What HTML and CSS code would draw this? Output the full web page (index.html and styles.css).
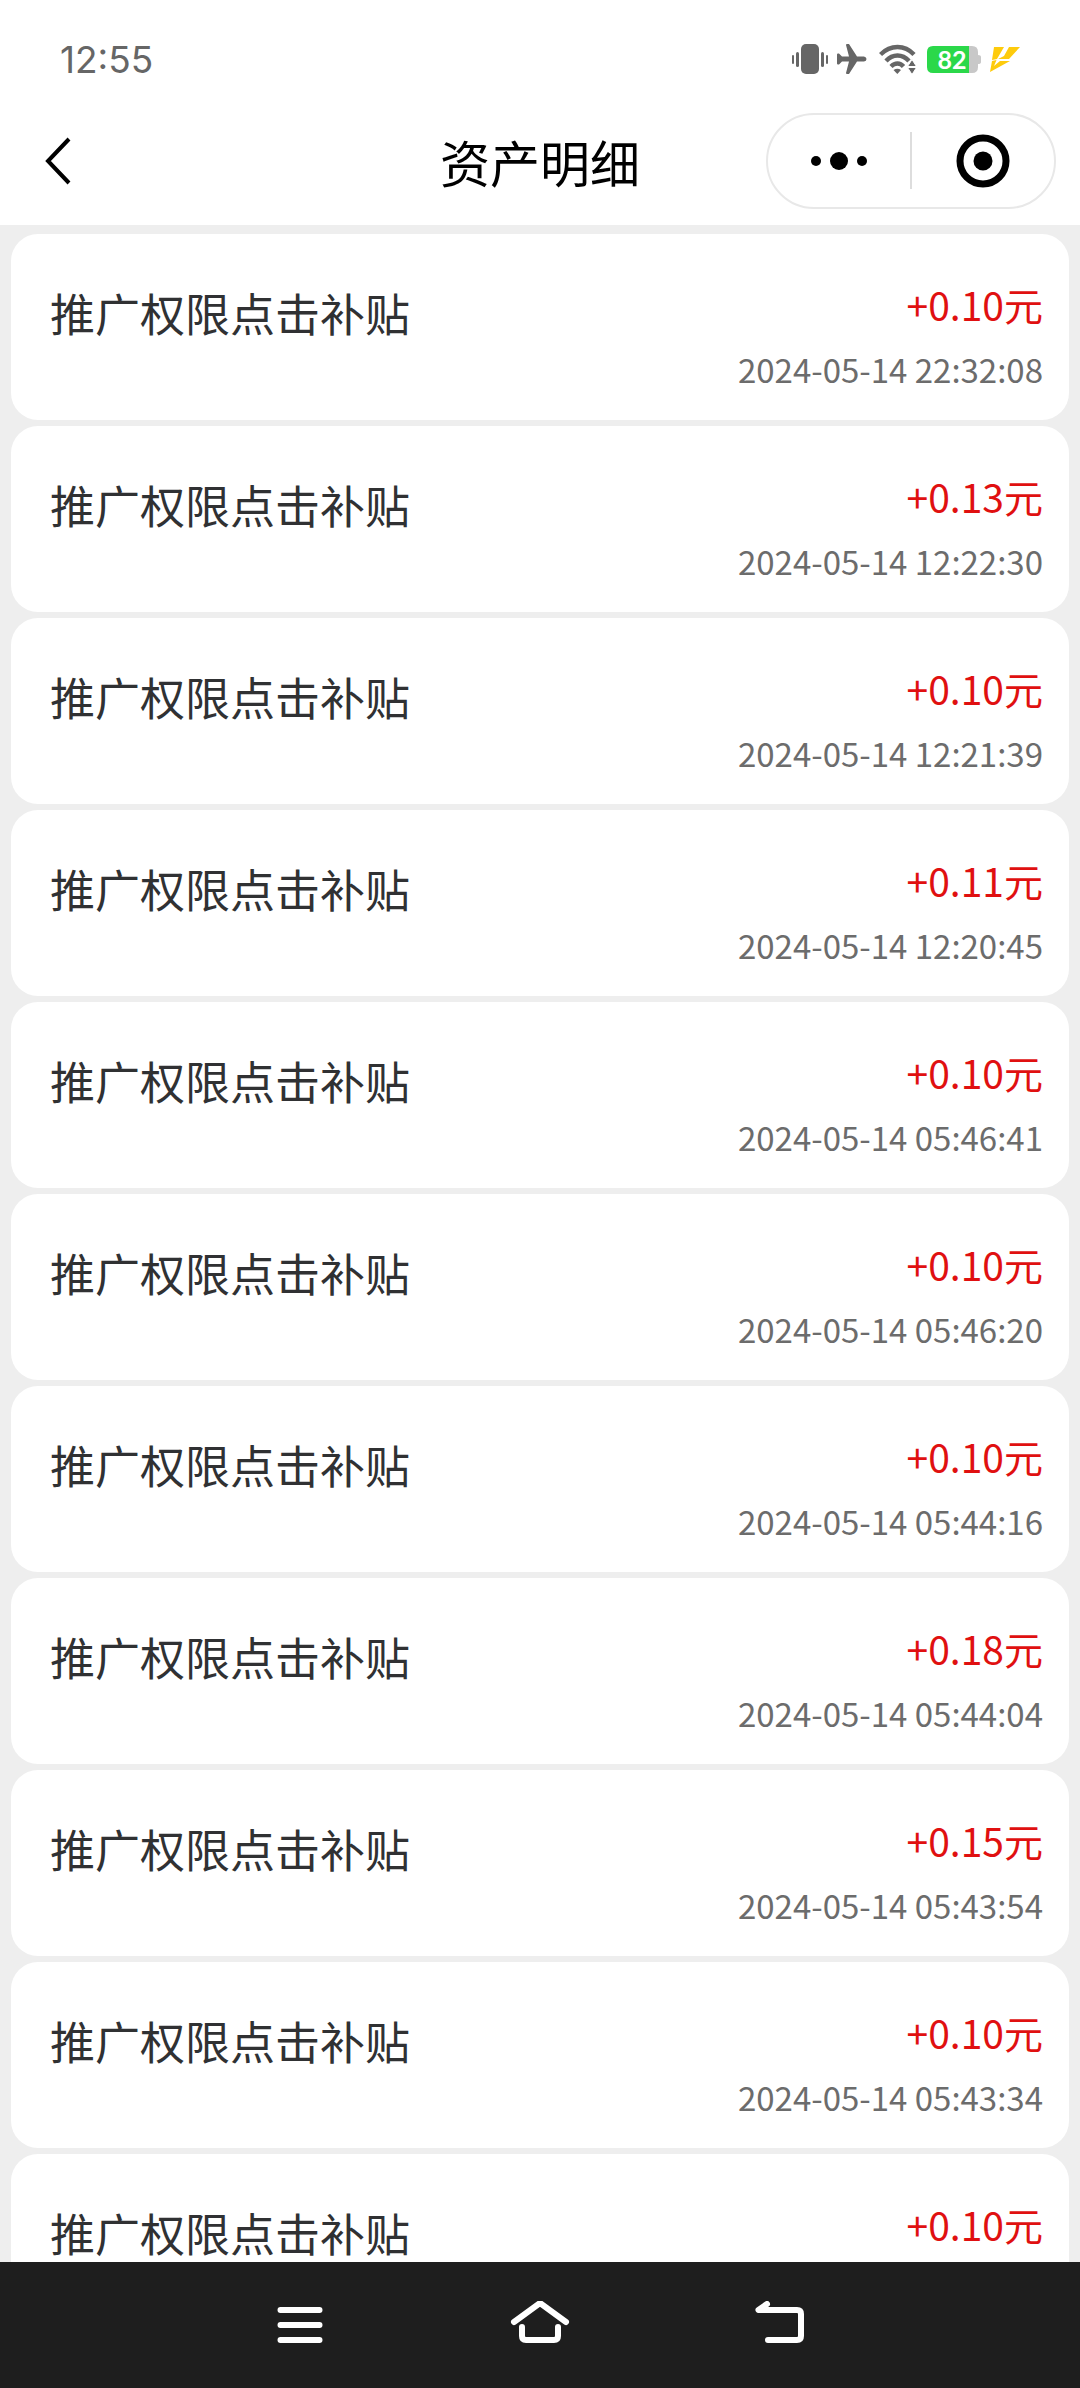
FILE: index.html
```html
<!DOCTYPE html>
<html lang="zh-CN">

<head>
    <meta charset="UTF-8">
    <meta name="viewport" content="width=device-width, initial-scale=1.0">
    <title>资产明细</title>
    <link rel="stylesheet" href="styles.css">
</head>

<body>

    <div class="status-bar">
        <span class="time">12:55</span>
        <div class="status-icons">
            <!-- vibrate -->
            <svg width="36" height="30" viewBox="0 0 36 30" fill="#666">
                <rect x="9" y="0" width="18" height="30" rx="5"/>
                <rect x="4" y="8" width="3" height="15" rx="1.5"/>
                <rect x="0" y="11" width="2" height="9" rx="1"/>
                <rect x="29" y="8" width="3" height="15" rx="1.5"/>
                <rect x="34" y="11" width="2" height="9" rx="1"/>
            </svg>
            <!-- airplane mode -->
            <svg class="plane" width="30" height="30" viewBox="0 0 30 30" fill="#666">
                <path d="M0 10.5Q0 9.5 1 9.5H2L5 12.5H12L9 1Q9 0 10 0H12L20 12.5H27Q29.5 13 29.5 15T27 17.5H20L12 30H10Q9 30 9 29L12 17.5H5L2 20.5H1Q0 20.5 0 19.5Z"/>
            </svg>
            <!-- wifi -->
            <svg class="wifi" width="37" height="30" viewBox="0 0 37 30" fill="none" stroke="#666" stroke-width="4.4">
                <path d="M1.5 10.5Q9 3 18.5 3T35 10.5"/>
                <path d="M7 17Q12 11.5 18.5 11.5T30 17"/>
                <path d="M12 22.500Q15 19.500 18.500 19.500T24.500 22.500"/>
                <path d="M14.500 26Q18.500 23.500 22 26L18.300 30Z" fill="#666" stroke="none"/>
                <path d="M33 15.500L37.500 22.500H28.500ZM33 30.500L28.500 23.500H37.500Z" fill="#666" stroke="#fff" stroke-width="1"/>
            </svg>
            <!-- battery -->
            <svg class="battery" width="54" height="27" viewBox="0 0 54 27">
                <path d="M42 0H45Q51 0 51 6V9Q54 9 54 11V16Q54 18 51 18V21Q51 27 45 27H42Z" fill="#c8c8c8"/>
                <path d="M6 0H42V27H6Q0 27 0 21V6Q0 0 6 0Z" fill="#2bd84a"/>
                <text x="25" y="23" class="battery-level">82</text>
            </svg>
            <!-- charging -->
            <svg class="bolt" width="30" height="25" viewBox="0 0 30 25" fill="#fecb0c">
                <path d="M4 0H14L7 12L2 13Z"/>
                <path d="M19 0H30L19 12H8L14 9Z"/>
                <path d="M2 14L6.500 13L4 19L10 14H20L0 25Z"/>
            </svg>
        </div>
    </div>

    <header>
        <button class="back" aria-label="返回">
            <svg width="26" height="48" viewBox="0 0 26 48" fill="none" stroke="#000" stroke-width="4">
                <path d="M24 2L3 24L24 46"/>
            </svg>
        </button>
        <h1>资产明细</h1>
        <div class="capsule">
            <button aria-label="更多">
                <svg width="56" height="18" viewBox="0 0 56 18">
                    <circle cx="5" cy="9" r="5"/>
                    <circle cx="28" cy="9" r="9"/>
                    <circle cx="51" cy="9" r="5"/>
                </svg>
            </button>
            <button aria-label="关闭">
                <svg width="54" height="54" viewBox="0 0 54 54">
                    <circle cx="27" cy="27" r="23" fill="none" stroke="#000" stroke-width="7"/>
                    <circle cx="27" cy="27" r="9.500"/>
                </svg>
            </button>
        </div>
    </header>

    <main>
        <ul class="records">
            <li class="record">
                <h2>推广权限点击补贴</h2>
                <div class="detail">
                    <span class="amount">+0.10元</span>
                    <time>2024-05-14 22:32:08</time>
                </div>
            </li>
            <li class="record">
                <h2>推广权限点击补贴</h2>
                <div class="detail">
                    <span class="amount">+0.13元</span>
                    <time>2024-05-14 12:22:30</time>
                </div>
            </li>
            <li class="record">
                <h2>推广权限点击补贴</h2>
                <div class="detail">
                    <span class="amount">+0.10元</span>
                    <time>2024-05-14 12:21:39</time>
                </div>
            </li>
            <li class="record">
                <h2>推广权限点击补贴</h2>
                <div class="detail">
                    <span class="amount">+0.11元</span>
                    <time>2024-05-14 12:20:45</time>
                </div>
            </li>
            <li class="record">
                <h2>推广权限点击补贴</h2>
                <div class="detail">
                    <span class="amount">+0.10元</span>
                    <time>2024-05-14 05:46:41</time>
                </div>
            </li>
            <li class="record">
                <h2>推广权限点击补贴</h2>
                <div class="detail">
                    <span class="amount">+0.10元</span>
                    <time>2024-05-14 05:46:20</time>
                </div>
            </li>
            <li class="record">
                <h2>推广权限点击补贴</h2>
                <div class="detail">
                    <span class="amount">+0.10元</span>
                    <time>2024-05-14 05:44:16</time>
                </div>
            </li>
            <li class="record">
                <h2>推广权限点击补贴</h2>
                <div class="detail">
                    <span class="amount">+0.18元</span>
                    <time>2024-05-14 05:44:04</time>
                </div>
            </li>
            <li class="record">
                <h2>推广权限点击补贴</h2>
                <div class="detail">
                    <span class="amount">+0.15元</span>
                    <time>2024-05-14 05:43:54</time>
                </div>
            </li>
            <li class="record">
                <h2>推广权限点击补贴</h2>
                <div class="detail">
                    <span class="amount">+0.10元</span>
                    <time>2024-05-14 05:43:34</time>
                </div>
            </li>
            <li class="record">
                <h2>推广权限点击补贴</h2>
                <div class="detail">
                    <span class="amount">+0.10元</span>
                </div>
            </li>
        </ul>
    </main>

    <nav class="system-nav">
        <button aria-label="最近任务">
            <svg width="60" height="48" viewBox="0 0 60 48">
                <path d="M10.500 9H49.500M10.500 24H49.500M10.500 39H49.500"/>
            </svg>
        </button>
        <button aria-label="主屏幕">
            <svg width="60" height="48" viewBox="0 0 60 48">
                <path d="M4 21L30 2L56 21M12 26V35Q12 39 16 39H44Q48 39 48 35V26"/>
            </svg>
        </button>
        <button aria-label="返回上一级">
            <svg width="60" height="48" viewBox="0 0 60 48">
                <path d="M17 3L8.500 9H47Q51 9 51 13V35Q51 39 47 39H18"/>
            </svg>
        </button>
    </nav>

</body>

</html>
```

FILE: styles.css
```css
* {
    box-sizing: border-box;
}

body {
    display: flex;
    flex-direction: column;
    height: 100vh;
    margin: 0;
    overflow: hidden;
    font-family: "Noto Sans CJK SC", sans-serif;
    background-color: #eee;
    color: #303133;
}

button {
    display: flex;
    align-items: center;
    justify-content: center;
    padding: 0;
    border: none;
    background: none;
    cursor: pointer;
}

.status-bar {
    display: flex;
    flex-shrink: 0;
    align-items: center;
    justify-content: space-between;
    height: 96px;
    padding: 22px 60px 0;
    background-color: #fff;
}

.time {
    font-family: Inter, sans-serif;
    font-size: 37px;
    color: #666;
}

.status-icons {
    display: flex;
    align-items: center;
}

.plane {
    margin-left: 9px;
}

.wifi {
    margin-left: 12px;
}

.battery {
    margin-left: 11px;
    overflow: visible;
}

.bolt {
    margin-left: 9px;
}

.battery-level {
    font-family: Lato, sans-serif;
    font-size: 25px;
    font-weight: bold;
    text-anchor: middle;
    fill: #fff;
}

header {
    display: grid;
    grid-template-columns: 1fr auto 1fr;
    flex-shrink: 0;
    align-items: center;
    height: 129px;
    padding: 0 24px;
    background-color: #fff;
}

.back {
    justify-self: start;
    width: 68px;
    height: 96px;
}

h1 {
    margin: 0;
    font-size: 50px;
    font-weight: normal;
    color: #000;
}

.capsule {
    display: flex;
    align-items: center;
    justify-self: end;
    width: 290px;
    height: 96px;
    border: 2px solid #e8e8e8;
    border-radius: 48px;
}

.capsule button {
    flex: 1;
    height: 57px;
}

.capsule button + button {
    border-left: 2px solid #ddd;
}

main {
    flex: 1;
    min-height: 0;
    overflow: hidden;
}

.records {
    display: flex;
    flex-direction: column;
    gap: 6px;
    margin: 0;
    padding: 9px 11px;
    list-style: none;
}

.record {
    display: flex;
    justify-content: space-between;
    min-height: 186px;
    padding: 42px 26px 20px 39px;
    border-radius: 27px;
    background-color: #fff;
}

.record h2 {
    margin: 0;
    font-size: 45px;
    font-weight: normal;
    line-height: 74px;
}

.detail {
    display: flex;
    flex-direction: column;
    align-items: flex-end;
}

.amount {
    font-size: 39px;
    line-height: 56px;
    color: #e01010;
}

.detail time {
    margin-top: 9px;
    font-size: 33px;
    line-height: 56px;
    color: #6c6c6c;
}

.system-nav {
    display: grid;
    grid-template-columns: repeat(3, 1fr);
    flex-shrink: 0;
    height: 126px;
    padding: 0 16.6667%;
    background-color: #1e1e1e;
}

.system-nav svg {
    fill: none;
    stroke: #fff;
    stroke-width: 6px;
    stroke-linecap: round;
    stroke-linejoin: round;
}
```
